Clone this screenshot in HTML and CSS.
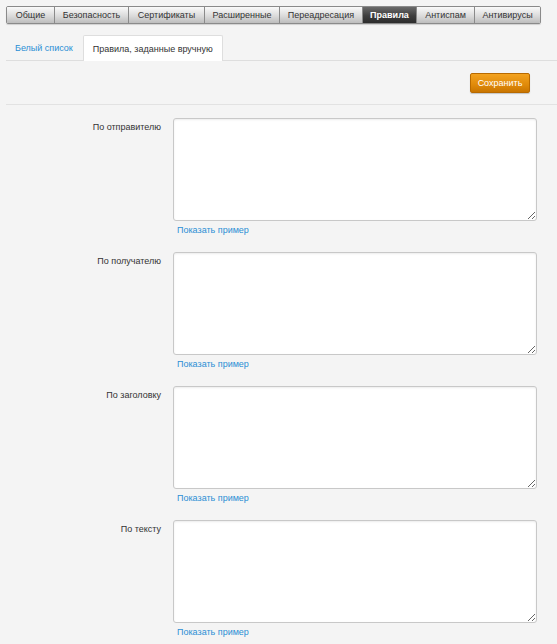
FILE: index.html
```html
<!DOCTYPE html>
<html lang="ru">
<head>
<meta charset="utf-8">
<title>Правила</title>
<link rel="stylesheet" href="styles.css">
</head>
<body>
<div class="page">
  <nav class="tabs">
    <a class="tab t1">Общие</a>
    <a class="tab t2">Безопасность</a>
    <a class="tab t3">Сертификаты</a>
    <a class="tab t4">Расширенные</a>
    <a class="tab t5">Переадресация</a>
    <a class="tab t6 active">Правила</a>
    <a class="tab t7">Антиспам</a>
    <a class="tab t8">Антивирусы</a>
  </nav>
  <div class="subtabs">
    <a class="subtab link">Белый список</a>
    <a class="subtab current">Правила, заданные вручную</a>
  </div>
  <div class="toolbar">
    <button class="save">Сохранить</button>
  </div>
  <form class="rules">
    <div class="row">
      <label class="label">По отправителю</label>
      <div class="field">
        <textarea class="area"></textarea>
        <a class="example">Показать пример</a>
      </div>
    </div>
    <div class="row">
      <label class="label">По получателю</label>
      <div class="field">
        <textarea class="area"></textarea>
        <a class="example">Показать пример</a>
      </div>
    </div>
    <div class="row">
      <label class="label">По заголовку</label>
      <div class="field">
        <textarea class="area"></textarea>
        <a class="example">Показать пример</a>
      </div>
    </div>
    <div class="row">
      <label class="label">По тексту</label>
      <div class="field">
        <textarea class="area"></textarea>
        <a class="example">Показать пример</a>
      </div>
    </div>
  </form>
</div>
</body>
</html>
```

FILE: styles.css
```css
html, body {
  margin: 0;
  padding: 0;
  background: #f4f4f4;
  font-family: "Liberation Sans", Arial, sans-serif;
  color: #333;
}

.page {
  padding: 6px 0 0 6px;
}

.tabs {
  display: flex;
  width: 535px;
  height: 18px;
  box-sizing: border-box;
  border: 1px solid #8a8a8a;
  border-radius: 2px;
  overflow: hidden;
  box-shadow: 0 1px 1px rgba(0,0,0,0.15);
}

.tab {
  display: flex;
  align-items: center;
  justify-content: center;
  font-size: 9px;
  color: #333;
  background: linear-gradient(#fafafa, #d8d8d8 60%, #bdbdbd);
  border-right: 1px solid #8a8a8a;
  box-sizing: border-box;
  white-space: nowrap;
}
.tab:last-child { border-right: 0; }
.t1 { width: 48px; }
.t2 { width: 74px; }
.t3 { width: 76px; }
.t4 { width: 75px; }
.t5 { width: 83px; }
.t6 { width: 54px; }
.t7 { width: 58px; }
.t8 { flex: 1; }

.tab.active {
  background: linear-gradient(#6a6a6a, #3e3e3e 55%, #2c2c2c);
  color: #fff;
  font-weight: bold;
}

.subtabs {
  display: flex;
  align-items: flex-end;
  height: 37px;
  box-sizing: border-box;
  border-bottom: 1px solid #dedede;
}

.subtab {
  font-size: 9px;
  height: 25px;
  display: flex;
  align-items: center;
  box-sizing: border-box;
}
.subtab.link {
  color: #2b8fd4;
  padding: 0 10px 0 9px;
}
.subtab.current {
  background: #fff;
  border: 1px solid #dedede;
  border-bottom: 0;
  border-radius: 2px 2px 0 0;
  padding: 0 9px;
  margin-bottom: -1px;
  height: 26px;
  color: #333;
}

.toolbar {
  display: flex;
  justify-content: flex-end;
  padding: 12px 27px 11px 0;
  border-bottom: 1px solid #e2e2e2;
}

.save {
  font-family: "Liberation Sans", Arial, sans-serif;
  font-size: 9px;
  color: #fff;
  height: 20px;
  width: 60px;
  padding: 0;
  border: 1px solid #b86a00;
  border-radius: 2px;
  background: linear-gradient(#f3a21f, #e08a0a 60%, #c97500);
  box-shadow: 0 1px 1px rgba(0,0,0,0.2);
}

.rules {
  padding-top: 13px;
}

.row {
  display: flex;
  gap: 12px;
  margin-bottom: 16px;
}

.label {
  width: 155px;
  text-align: right;
  font-size: 9px;
  color: #333;
  padding-top: 4px;
}

.field {
  display: flex;
  flex-direction: column;
}

.area {
  width: 364px;
  height: 103px;
  box-sizing: border-box;
  border: 1px solid #c8c8c8;
  border-radius: 3px;
  background: #fff;
  box-shadow: inset 0 1px 2px rgba(0,0,0,0.08);
  margin: 0;
  resize: both;
}

.example {
  font-size: 9px;
  color: #2b8fd4;
  padding: 4px 0 0 4px;
  line-height: 11px;
}
```
